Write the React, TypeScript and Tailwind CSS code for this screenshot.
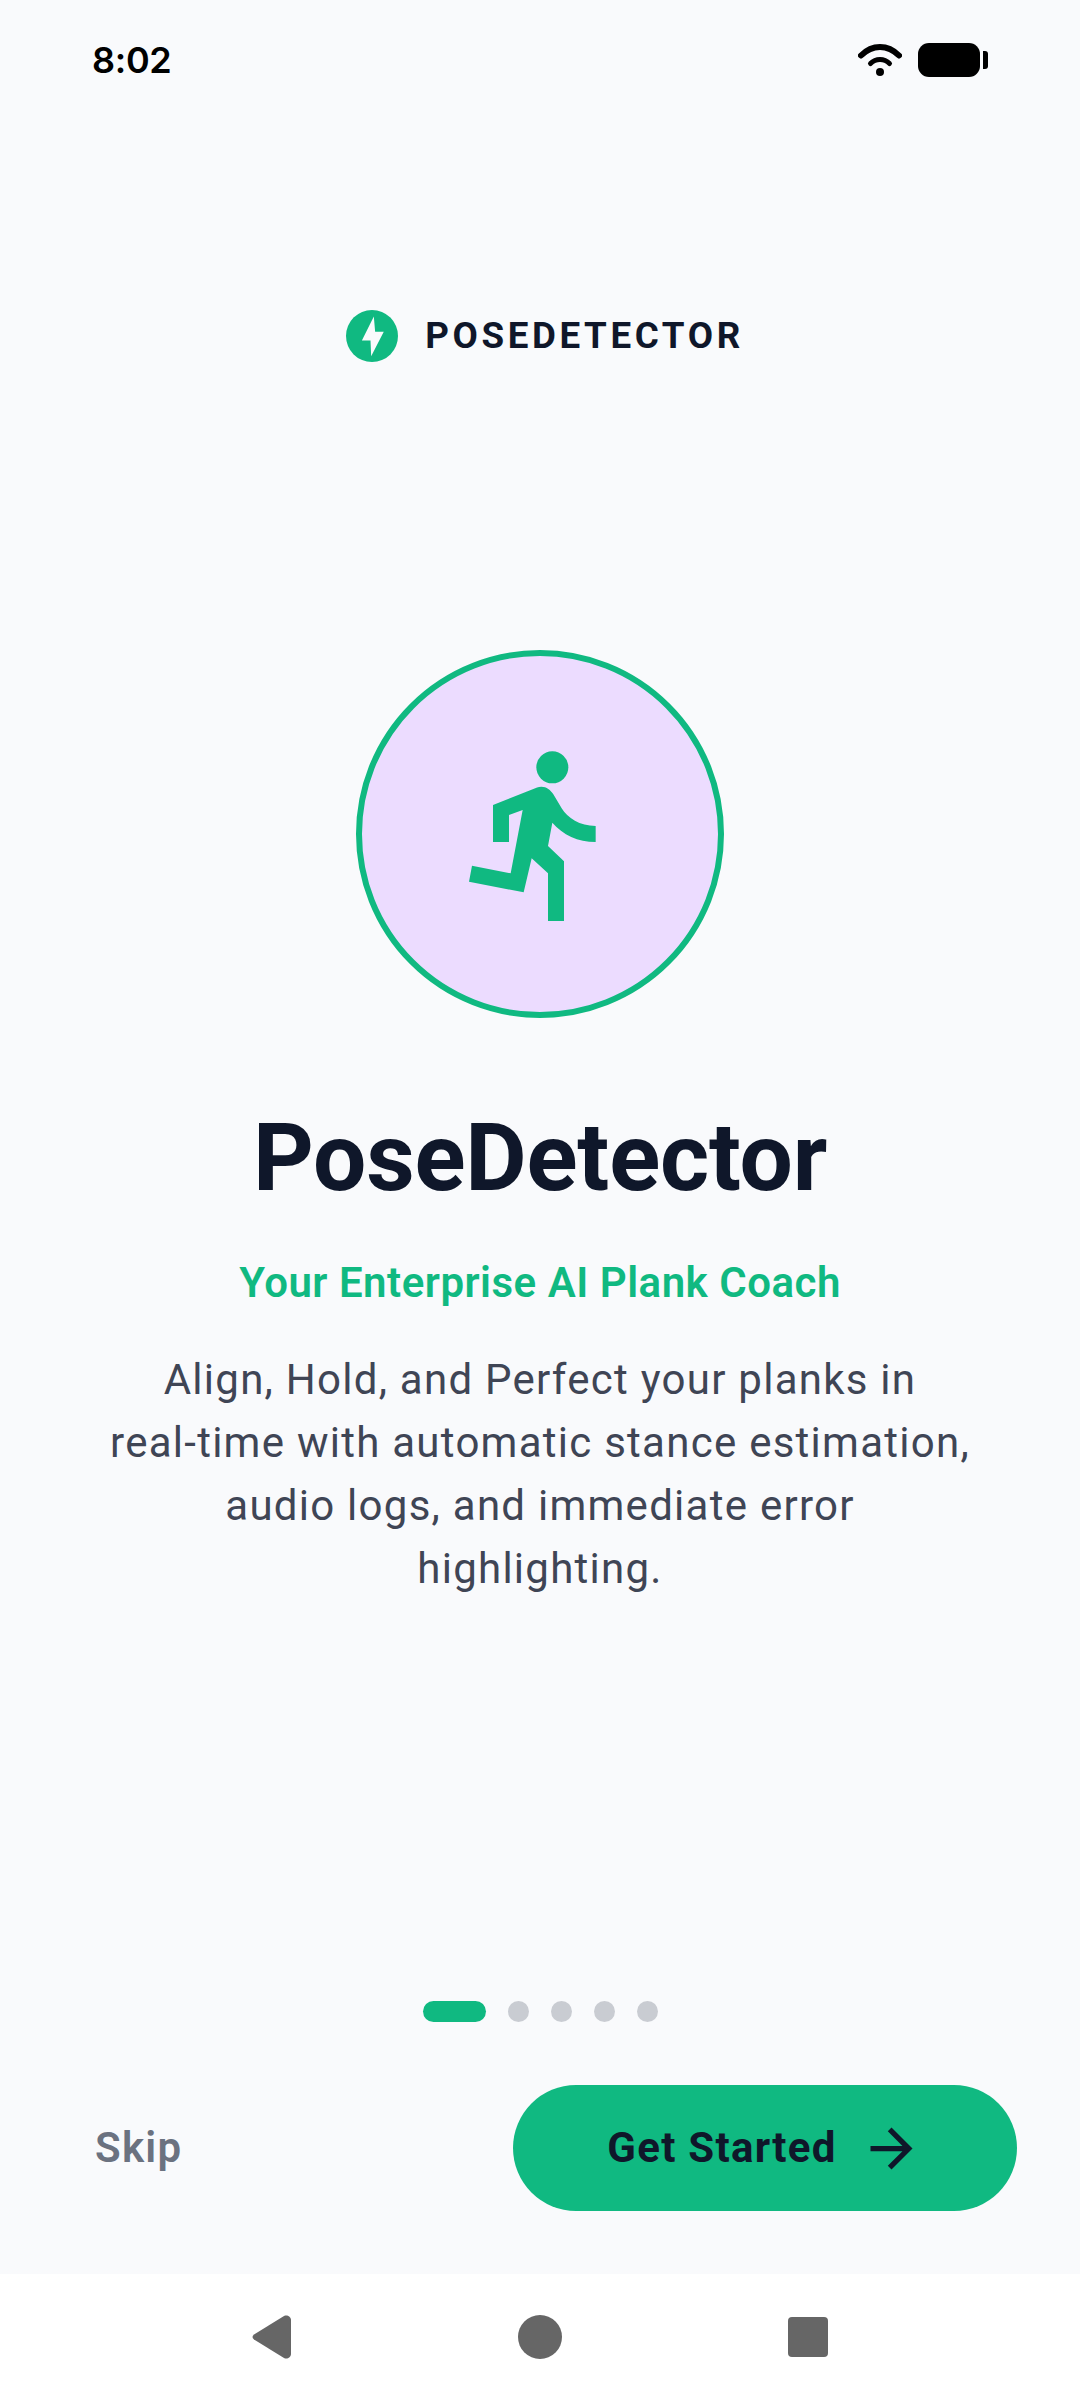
export default function App() {
  return (
    <div className="w-[1080px] h-[2400px] flex flex-col bg-[#f9fafc] overflow-hidden" style={{ fontFamily: 'Roboto, "Noto Sans", sans-serif' }}>
      <div className="h-[120px] flex items-center justify-between pl-[92px] pr-[92px] shrink-0">
        <span className="text-[36px] leading-none font-semibold text-black tracking-[-0.3px]" style={{ fontFamily: 'Inter, Roboto, sans-serif' }}>8:02</span>
        <div className="flex items-center gap-[16px]">
          <svg width="44" height="34" viewBox="0 0 44 34" className="text-black">
            <path d="M3 12.500C8 7.500 14.500 4 22 4s14 3.500 19 8.500" fill="none" stroke="currentColor" strokeWidth="6" strokeLinecap="round" />
            <path d="M12.500 20.500C15 18 18.300 16.500 22 16.500s7 1.500 9.500 4" fill="none" stroke="currentColor" strokeWidth="5" strokeLinecap="round" />
            <circle cx="22" cy="29" r="4" fill="currentColor" />
          </svg>
          <div className="flex items-center gap-[3px]">
            <div className="w-[62px] h-[34px] rounded-[11px] bg-black" />
            <div className="w-[5px] h-[18px] rounded-r-[3px] bg-black" />
          </div>
        </div>
      </div>

      <div className="flex flex-col items-center flex-1">
        <div className="mt-[190px] pl-[10px] flex items-center gap-[27px]">
          <svg width="52" height="52" viewBox="48 60 157 157" className="shrink-0">
            <circle cx="126.500" cy="138.500" r="78.500" fill="#10b981" />
            <path d="M132 80 96 152h26l2 48 38-74h-26z" fill="#f9fafc" />
          </svg>
          <span className="text-[36.750px] leading-none font-bold tracking-[3.600px] text-[#0f172a]">POSEDETECTOR</span>
        </div>

        <div className="mt-[288px] w-[368px] h-[368px] rounded-full border-[6px] border-[#10b981] bg-[#ecdcff] flex items-center justify-center">
          <svg width="356" height="356" viewBox="66 48 1068 1068" fill="#10b981">
            <circle cx="637" cy="382" r="48" />
            <path d="M459 495 580 447C588 443 594 440 604 440 620 440 632 450 640 463L665 505C682 534 720 558 767 558V606C714 606 668 584 637 548L624 618 672 664V843H624V700L575 655 551 757 387 725 396 677 512 700 548 510 507 525V606H459Z" />
          </svg>
        </div>

        <h1 className="mt-[85px] text-[94.500px] leading-[110px] font-bold tracking-[-0.2px] text-[#0f172a]">PoseDetector</h1>
        <p className="mt-[43px] text-[42px] leading-[53px] font-semibold tracking-[0.5px] text-[#10b981]">Your Enterprise AI Plank Coach</p>
        <p className="mt-[39px] w-[868px] text-center text-[42px] leading-[63px] text-[#3f4555] tracking-[1.26px]">
          Align, Hold, and Perfect your planks in<br />real-time with automatic stance estimation, audio logs, and immediate error highlighting.
        </p>

        <div className="mt-auto flex items-center gap-[22px]">
          <div className="w-[63px] h-[21px] rounded-full bg-[#10b981]" />
          <div className="w-[21px] h-[21px] rounded-full bg-[#c9ccd2]" />
          <div className="w-[21px] h-[21px] rounded-full bg-[#c9ccd2]" />
          <div className="w-[21px] h-[21px] rounded-full bg-[#c9ccd2]" />
          <div className="w-[21px] h-[21px] rounded-full bg-[#c9ccd2]" />
        </div>

        <div className="mt-[63px] mb-[63px] w-full flex items-center justify-between pl-[95px] pr-[63px]">
          <span className="text-[42px] leading-none font-semibold tracking-[1.260px] text-[#6b7280]">Skip</span>
          <div className="h-[126px] w-[504px] rounded-full bg-[#10b981] flex items-center justify-center gap-[23px]">
            <span className="text-[42px] leading-none font-bold tracking-[1.260px] text-[#0f172a]">Get Started</span>
            <svg width="63" height="63" viewBox="0 0 24 24" fill="#0f172a"><path d="M12 4l-1.410 1.410L16.170 11H4v2h12.170l-5.580 5.590L12 20l8-8z" /></svg>
          </div>
        </div>
      </div>

      <div className="h-[126px] bg-white shrink-0 flex items-center justify-center gap-[226px]">
        <svg width="40" height="44" viewBox="0 0 40 44" fill="#666666"><path d="M2 19.500 32 1c3-1.500 7 .5 7 4v34c0 3.500-4 5.500-7 4L2 24.500c-2-1.500-2-3.500 0-5z" /></svg>
        <div className="w-[44px] h-[44px] rounded-full bg-[#666666]" />
        <div className="w-[40px] h-[40px] rounded-[4px] bg-[#666666]" />
      </div>
    </div>
  );
}
